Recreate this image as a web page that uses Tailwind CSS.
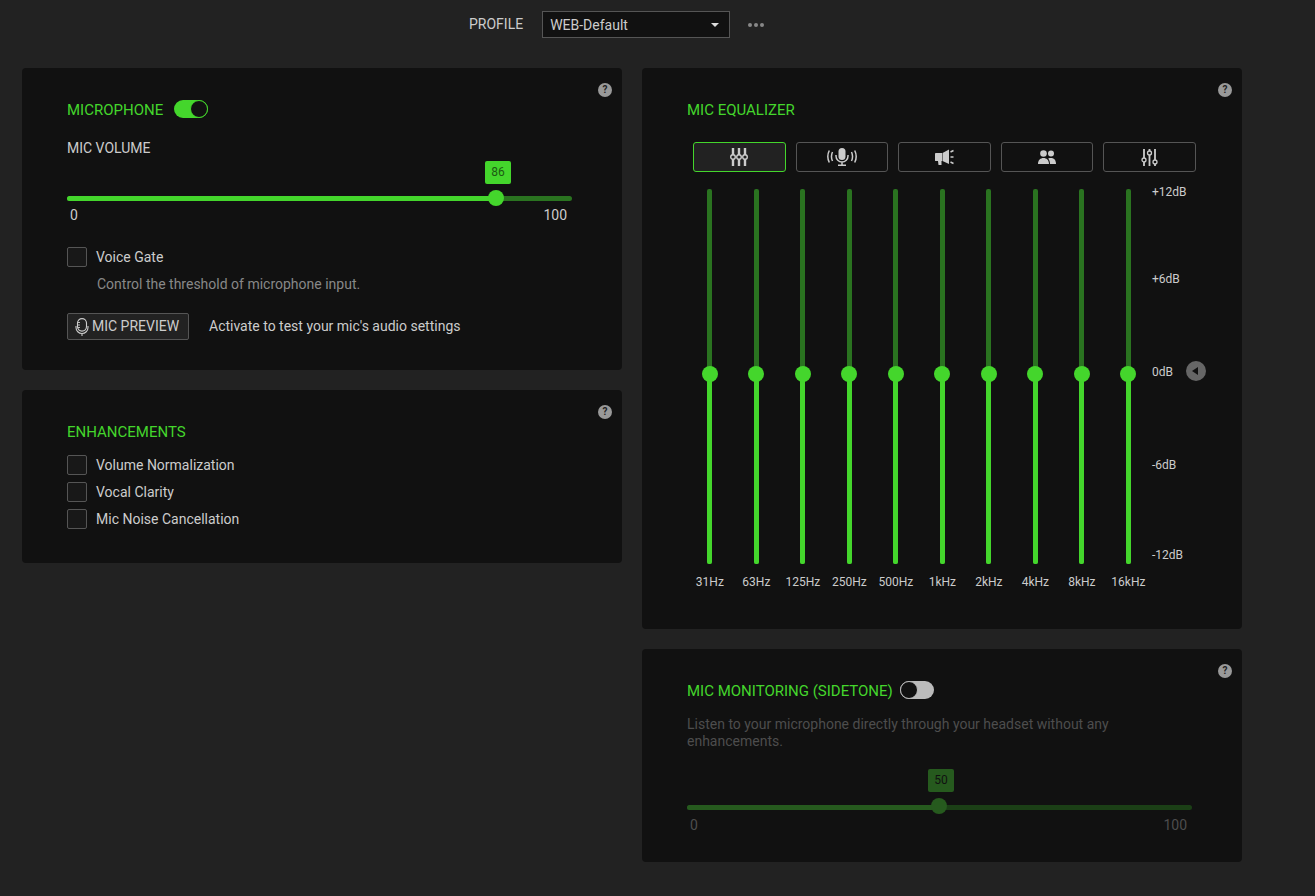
<!DOCTYPE html>
<html lang="en">
<head>
  <meta charset="UTF-8" />
  <title>Mic settings</title>
  <script src="https://cdn.jsdelivr.net/npm/@tailwindcss/browser@4"></script>
</head>
<body class="bg-[#222222] font-['Roboto',sans-serif] text-[14px] text-[#cccccc] h-[896px] overflow-hidden">
  <!-- Profile bar -->
  <header class="h-[68px] flex items-start">
    <span class="ml-[469px] mt-[16px] leading-[17px]">PROFILE</span>
    <div class="ml-[19px] mt-[11px] w-[188px] h-[27px] bg-[#111111] border border-[#555555] flex items-center pl-[7px] pr-[10px] justify-between">
      <span class="pt-[1px]">WEB-Default</span>
      <span class="w-0 h-0 border-x-[4px] border-x-transparent border-t-[4px] border-t-[#dddddd]"></span>
    </div>
    <div class="ml-[18px] mt-[23px] flex gap-[2px]">
      <span class="w-[4px] h-[4px] rounded-full bg-[#888888]"></span>
      <span class="w-[4px] h-[4px] rounded-full bg-[#888888]"></span>
      <span class="w-[4px] h-[4px] rounded-full bg-[#888888]"></span>
    </div>
  </header>

  <div class="ml-[22px] w-[1220px] grid grid-cols-[600px_600px] gap-x-[20px] items-start">
    <!-- Left column -->
    <div class="flex flex-col gap-[20px]">
      <section class="relative h-[302px] bg-[#111111] rounded-[4px] pl-[45px] pr-[50px] pt-[32px]">
        <span class="absolute right-[10px] top-[15px] w-[14px] h-[14px] rounded-full bg-[#999999] text-[#222222] text-[10px] font-bold leading-[14px] text-center">?</span>
        <div class="flex items-center h-[18px]">
          <h2 class="text-[15px] text-[#44d62c] leading-[19px] pt-[3px]">MICROPHONE</h2>
          <span class="ml-[11px] relative w-[34px] h-[18px] rounded-full bg-[#44d62c]">
            <span class="absolute right-0 top-0 w-[18px] h-[18px] rounded-full bg-[#111111] border border-[#44d62c]"></span>
          </span>
        </div>
        <div class="mt-[22px] leading-[17px]">MIC VOLUME</div>
        <div class="relative mt-[39px] h-[5px] w-[505px] rounded-full bg-[#2a7320]">
          <div class="h-[5px] w-[429px] rounded-full bg-[#44d62c]"></div>
          <span class="absolute left-[421px] top-[-6px] w-[16px] h-[16px] rounded-full bg-[#44d62c]"></span>
          <span class="absolute left-[418px] top-[-35px] w-[26px] h-[23px] rounded-[2px] bg-[#44d62c] text-[#1c5a13] text-[12px] leading-[23px] text-center">86</span>
        </div>
        <div class="mt-[6px] w-[505px] pl-[3px] pr-[5px] flex justify-between leading-[17px]"><span>0</span><span>100</span></div>
        <label class="mt-[23px] flex items-center gap-[9px] h-[20px]">
          <span class="w-[20px] h-[20px] rounded-[2px] border border-[#555555] bg-[#181818]"></span>
          <span>Voice Gate</span>
        </label>
        <p class="mt-[9px] ml-[30px] text-[#888888] leading-[17px]">Control the threshold of microphone input.</p>
        <div class="mt-[20px] flex items-center">
          <button class="w-[122px] h-[27px] rounded-[2px] border border-[#555555] bg-[#222222] flex items-center pl-[7px] gap-[3px] text-[#cccccc]">
            <svg class="w-[14px] h-[18px]" viewBox="0 0 14 18" fill="none" stroke="#cccccc" stroke-width="1.1"><rect x="2.500" y="0.600" width="9" height="12.500" rx="4.500"/><path d="M1 8v1.500a6 6 0 0 0 12 0V8M7 15.500V18"/><path d="M2.500 4.500h2.500M2.500 7h2.500M2.500 9.500h2.500" stroke-width="0.900"/></svg>
            <span>MIC PREVIEW</span>
          </button>
          <span class="ml-[20px]">Activate to test your mic's audio settings</span>
        </div>
      </section>

      <section class="relative h-[173px] bg-[#111111] rounded-[4px] pl-[45px] pt-[32px]">
        <span class="absolute right-[10px] top-[15px] w-[14px] h-[14px] rounded-full bg-[#999999] text-[#222222] text-[10px] font-bold leading-[14px] text-center">?</span>
        <h2 class="text-[15px] text-[#44d62c] leading-[19px] pt-[1px]">ENHANCEMENTS</h2>
        <div class="mt-[13px] flex flex-col gap-[7px]">
          <label class="flex items-center gap-[9px] h-[20px]"><span class="w-[20px] h-[20px] rounded-[2px] border border-[#555555] bg-[#181818]"></span><span>Volume Normalization</span></label>
          <label class="flex items-center gap-[9px] h-[20px]"><span class="w-[20px] h-[20px] rounded-[2px] border border-[#555555] bg-[#181818]"></span><span>Vocal Clarity</span></label>
          <label class="flex items-center gap-[9px] h-[20px]"><span class="w-[20px] h-[20px] rounded-[2px] border border-[#555555] bg-[#181818]"></span><span>Mic Noise Cancellation</span></label>
        </div>
      </section>
    </div>

    <!-- Right column -->
    <div class="flex flex-col gap-[20px]">
      <section class="relative h-[561px] bg-[#111111] rounded-[4px] pl-[45px] pt-[32px]">
        <span class="absolute right-[10px] top-[15px] w-[14px] h-[14px] rounded-full bg-[#999999] text-[#222222] text-[10px] font-bold leading-[14px] text-center">?</span>
        <h2 class="text-[15px] text-[#44d62c] leading-[19px] pt-[1px]">MIC EQUALIZER</h2>
        <!-- Presets -->
        <div class="mt-[22px] ml-[6px] w-[503px] grid grid-cols-5 gap-[10px]">
          <button class="h-[30px] rounded-[3px] border border-[#44d62c] bg-[#222222] flex items-center justify-center">
            <svg class="w-[18px] h-[18px]" viewBox="0 0 18 18" fill="none" stroke="#cccccc" stroke-width="2.400"><path d="M3 0v18M9 0v18M15 0v18"/><circle cx="3" cy="9" r="2.300" fill="#222222" stroke-width="1.400"/><circle cx="9" cy="9" r="2.300" fill="#222222" stroke-width="1.400"/><circle cx="15" cy="9" r="2.300" fill="#222222" stroke-width="1.400"/></svg>
          </button>
          <button class="h-[30px] rounded-[3px] border border-[#555555] flex items-center justify-center">
            <svg class="w-[30px] h-[18px]" viewBox="0 0 30 18" fill="none" stroke="#cccccc" stroke-width="1.500"><rect x="11.500" y="0" width="7" height="12" rx="3.500" fill="#cccccc" stroke="none"/><path d="M9 7v1a6 6 0 0 0 12 0V7M15 14v3.500M11 17.300h8"/><path d="M5.500 4c-1.400 3-1.400 6 0 9M2.300 2.500c-2 4-2 8 0 12M24.500 4c1.400 3 1.400 6 0 9M27.700 2.500c2 4 2 8 0 12"/></svg>
          </button>
          <button class="h-[30px] rounded-[3px] border border-[#555555] flex items-center justify-center">
            <svg class="w-[19px] h-[16px]" viewBox="0 0 19 16" fill="#cccccc"><path d="M0 4.500Q0 4 1 4h6v8H1Q0 12 0 11.500zM3 12h3.500v4H3.500zM7.500 4L14 .5V15L7.500 12z"/><path d="M15.500 3l3-1.500M15.500 8h3M15.500 13l3 1.500" fill="none" stroke="#cccccc" stroke-width="1.500"/></svg>
          </button>
          <button class="h-[30px] rounded-[3px] border border-[#555555] flex items-center justify-center">
            <svg class="w-[18px] h-[15px]" viewBox="0 0 18 15" fill="#cccccc"><circle cx="5.500" cy="3.500" r="3.300"/><circle cx="13" cy="3.500" r="3"/><path d="M0 14c0-4 2.500-6 5.500-6s5.500 2 5.500 6zM12 14c0-2.200-.6-4.200-1.800-5.600.8-.3 1.800-.4 2.800-.4 3 0 5 2 5 6z"/></svg>
          </button>
          <button class="h-[30px] rounded-[3px] border border-[#555555] flex items-center justify-center">
            <svg class="w-[17px] h-[19px]" viewBox="0 0 17 19" fill="none" stroke="#cccccc" stroke-width="1.800"><path d="M3 1v17M8.500 1v17M14 1v17"/><circle cx="3" cy="12" r="2" fill="#111111" stroke-width="1.300"/><circle cx="8.500" cy="5" r="2" fill="#111111" stroke-width="1.300"/><circle cx="14" cy="14" r="2" fill="#111111" stroke-width="1.300"/></svg>
          </button>
        </div>
        <!-- Bands -->
        <div class="mt-[17px] flex items-start">
          <div class="ml-[-0.4px] w-[465px] grid grid-cols-10">
            <div class="flex flex-col items-center"><div class="relative w-[5px] h-[375px] rounded-[2px] bg-[#2a7320]"><div class="absolute inset-x-0 bottom-0 h-[190px] rounded-b-[2px] bg-[#44d62c]"></div><span class="absolute left-[-5.5px] top-[177px] w-[16px] h-[16px] rounded-full bg-[#44d62c]"></span></div><span class="mt-[11px] text-[12px] leading-[15px]">31Hz</span></div>
            <div class="flex flex-col items-center"><div class="relative w-[5px] h-[375px] rounded-[2px] bg-[#2a7320]"><div class="absolute inset-x-0 bottom-0 h-[190px] rounded-b-[2px] bg-[#44d62c]"></div><span class="absolute left-[-5.5px] top-[177px] w-[16px] h-[16px] rounded-full bg-[#44d62c]"></span></div><span class="mt-[11px] text-[12px] leading-[15px]">63Hz</span></div>
            <div class="flex flex-col items-center"><div class="relative w-[5px] h-[375px] rounded-[2px] bg-[#2a7320]"><div class="absolute inset-x-0 bottom-0 h-[190px] rounded-b-[2px] bg-[#44d62c]"></div><span class="absolute left-[-5.5px] top-[177px] w-[16px] h-[16px] rounded-full bg-[#44d62c]"></span></div><span class="mt-[11px] text-[12px] leading-[15px]">125Hz</span></div>
            <div class="flex flex-col items-center"><div class="relative w-[5px] h-[375px] rounded-[2px] bg-[#2a7320]"><div class="absolute inset-x-0 bottom-0 h-[190px] rounded-b-[2px] bg-[#44d62c]"></div><span class="absolute left-[-5.5px] top-[177px] w-[16px] h-[16px] rounded-full bg-[#44d62c]"></span></div><span class="mt-[11px] text-[12px] leading-[15px]">250Hz</span></div>
            <div class="flex flex-col items-center"><div class="relative w-[5px] h-[375px] rounded-[2px] bg-[#2a7320]"><div class="absolute inset-x-0 bottom-0 h-[190px] rounded-b-[2px] bg-[#44d62c]"></div><span class="absolute left-[-5.5px] top-[177px] w-[16px] h-[16px] rounded-full bg-[#44d62c]"></span></div><span class="mt-[11px] text-[12px] leading-[15px]">500Hz</span></div>
            <div class="flex flex-col items-center"><div class="relative w-[5px] h-[375px] rounded-[2px] bg-[#2a7320]"><div class="absolute inset-x-0 bottom-0 h-[190px] rounded-b-[2px] bg-[#44d62c]"></div><span class="absolute left-[-5.5px] top-[177px] w-[16px] h-[16px] rounded-full bg-[#44d62c]"></span></div><span class="mt-[11px] text-[12px] leading-[15px]">1kHz</span></div>
            <div class="flex flex-col items-center"><div class="relative w-[5px] h-[375px] rounded-[2px] bg-[#2a7320]"><div class="absolute inset-x-0 bottom-0 h-[190px] rounded-b-[2px] bg-[#44d62c]"></div><span class="absolute left-[-5.5px] top-[177px] w-[16px] h-[16px] rounded-full bg-[#44d62c]"></span></div><span class="mt-[11px] text-[12px] leading-[15px]">2kHz</span></div>
            <div class="flex flex-col items-center"><div class="relative w-[5px] h-[375px] rounded-[2px] bg-[#2a7320]"><div class="absolute inset-x-0 bottom-0 h-[190px] rounded-b-[2px] bg-[#44d62c]"></div><span class="absolute left-[-5.5px] top-[177px] w-[16px] h-[16px] rounded-full bg-[#44d62c]"></span></div><span class="mt-[11px] text-[12px] leading-[15px]">4kHz</span></div>
            <div class="flex flex-col items-center"><div class="relative w-[5px] h-[375px] rounded-[2px] bg-[#2a7320]"><div class="absolute inset-x-0 bottom-0 h-[190px] rounded-b-[2px] bg-[#44d62c]"></div><span class="absolute left-[-5.5px] top-[177px] w-[16px] h-[16px] rounded-full bg-[#44d62c]"></span></div><span class="mt-[11px] text-[12px] leading-[15px]">8kHz</span></div>
            <div class="flex flex-col items-center"><div class="relative w-[5px] h-[375px] rounded-[2px] bg-[#2a7320]"><div class="absolute inset-x-0 bottom-0 h-[190px] rounded-b-[2px] bg-[#44d62c]"></div><span class="absolute left-[-5.5px] top-[177px] w-[16px] h-[16px] rounded-full bg-[#44d62c]"></span></div><span class="mt-[11px] text-[12px] leading-[15px]">16kHz</span></div>
          </div>
          <!-- dB scale -->
          <div class="ml-[0.4px] mt-[-4px] flex flex-col text-[12px] leading-[15px]">
            <span>+12dB</span>
            <span class="mt-[72px]">+6dB</span>
            <span class="mt-[78px] relative">0dB<span class="absolute left-[34px] top-[-4px] w-[20px] h-[20px] rounded-full bg-[#666666] flex items-center justify-center"><span class="w-0 h-0 border-y-[4px] border-y-transparent border-r-[6px] border-r-[#111111] mr-[2px]"></span></span></span>
            <span class="mt-[78px]">-6dB</span>
            <span class="mt-[75px]">-12dB</span>
          </div>
        </div>
      </section>

      <section class="relative h-[213px] bg-[#111111] rounded-[4px] pl-[45px] pr-[50px] pt-[32px]">
        <span class="absolute right-[10px] top-[15px] w-[14px] h-[14px] rounded-full bg-[#999999] text-[#222222] text-[10px] font-bold leading-[14px] text-center">?</span>
        <div class="flex items-center h-[18px]">
          <h2 class="text-[15px] text-[#44d62c] leading-[19px] pt-[3px]">MIC MONITORING (SIDETONE)</h2>
          <span class="ml-[7px] relative w-[34px] h-[18px] rounded-full bg-[#bbbbbb]">
            <span class="absolute left-0 top-0 w-[18px] h-[18px] rounded-full bg-[#111111] border border-[#bbbbbb]"></span>
          </span>
        </div>
        <p class="mt-[17px] text-[#4d4d4d] leading-[17px]">Listen to your microphone directly through your headset without any enhancements.</p>
        <div class="relative mt-[55px] h-[5px] w-[505px] rounded-full bg-[#1b3f16]">
          <div class="h-[5px] w-[252px] rounded-full bg-[#265a1e]"></div>
          <span class="absolute left-[244px] top-[-7px] w-[16px] h-[16px] rounded-full bg-[#265a1e]"></span>
          <span class="absolute left-[241px] top-[-36px] w-[26px] h-[23px] rounded-[2px] bg-[#265a1e] text-[#111111] text-[12px] leading-[23px] text-center">50</span>
        </div>
        <div class="mt-[7px] w-[505px] pl-[3px] pr-[5px] flex justify-between leading-[17px] text-[#4d4d4d]"><span>0</span><span>100</span></div>
      </section>
    </div>
  </div>
</body>
</html>
